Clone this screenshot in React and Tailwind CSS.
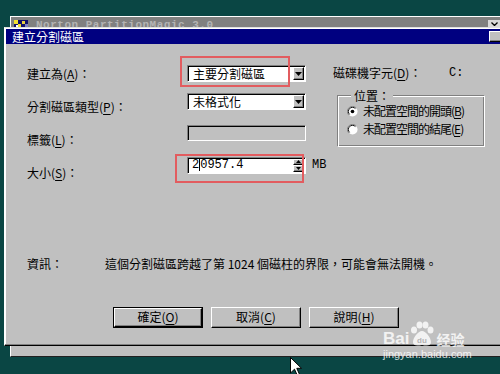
import React from 'react';

const cjk = "font-['Noto_Sans_CJK_TC','Noto_Sans_CJK_SC',sans-serif]";
const raised = 'border border-t-white border-l-white border-r-black border-b-black shadow-[inset_-1px_-1px_#808080]';
const sunken = 'border border-t-[#808080] border-l-[#808080] border-r-white border-b-white shadow-[inset_1px_1px_#000]';

function Key({ children }) {
  return <span className="underline underline-offset-2">{children}</span>;
}

function DownArrow() {
  return (
    <svg width="7" height="4" viewBox="0 0 7 4">
      <path d="M0 0H7L3.5 4Z" fill="#000" />
    </svg>
  );
}

function Dropdown({ value }) {
  return (
    <div className={`flex h-[17px] w-[119px] items-center bg-white ${sunken}`}>
      <span className="flex-1 pl-[5px] text-[12px] leading-none text-black">{value}</span>
      <div className={`mr-[1px] flex h-[13px] w-[11px] items-center justify-center bg-[#c0c0c0] ${raised}`}>
        <DownArrow />
      </div>
    </div>
  );
}

function Radio({ checked }) {
  return (
    <svg width="11" height="11" viewBox="0 0 12 12" className="shrink-0">
      <circle cx="6" cy="6" r="5.5" fill="#fff" />
      <path d="M10 2A5.6 5.6 0 0 0 2 10" stroke="#808080" strokeWidth="1" fill="none" />
      <path d="M9.2 2.8A4.5 4.5 0 0 0 2.8 9.2" stroke="#000" strokeWidth="1" fill="none" />
      {checked && <circle cx="6" cy="6" r="2" fill="#000" />}
    </svg>
  );
}

function Button({ children, isDefault }) {
  if (isDefault) {
    return (
      <div className="h-[21px] w-[90px] border border-black">
        <div className={`flex h-full w-full items-center justify-center bg-[#c0c0c0] text-[12px] ${raised}`}>
          {children}
        </div>
      </div>
    );
  }
  return (
    <div className={`flex h-[21px] w-[90px] items-center justify-center bg-[#c0c0c0] text-[12px] ${raised}`}>
      {children}
    </div>
  );
}

export default function App() {
  return (
    <div className={`relative h-[374px] w-[500px] overflow-hidden bg-[#0a4644] ${cjk} text-black`}>
      {/* background window, mostly hidden behind the dialog */}
      <div className="absolute left-[10px] top-[16px] h-[341px] w-[495px] border-t border-l border-t-white border-l-white border-b border-b-[#202020] bg-[#c0c0c0]">
        <div className="flex h-[10px] items-start overflow-hidden bg-[#808080] pl-[3px] pt-[2px]">
          <svg width="14" height="8" viewBox="0 0 14 8" className="mt-[1px] shrink-0">
            <rect width="14" height="8" fill="#10106a" />
            <rect x="0" y="0" width="4" height="4" fill="#f4e030" />
            <rect x="4" y="4" width="3" height="4" fill="#f4e030" />
            <rect x="8" y="1" width="3" height="3" fill="#e8d040" />
            <rect x="2" y="5" width="2" height="3" fill="#fff" />
            <rect x="11" y="4" width="3" height="3" fill="#8080c0" />
          </svg>
          <span className="ml-[8px] font-['Liberation_Mono',monospace] text-[11px] font-bold leading-[13px] tracking-[0.5px] text-[#b4b4b4]">
            Norton PartitionMagic 3.0
          </span>
          <div className="ml-auto mr-[5px] mt-[1px] flex h-[8px] w-[12px] shrink-0 items-center justify-center bg-[#d8d8d8]">
            <svg width="7" height="4" viewBox="0 0 7 4">
              <path d="M0.5 0.5L3.5 3.5L6.5 0.5" stroke="#000" strokeWidth="1.3" fill="none" />
            </svg>
          </div>
        </div>
      </div>

      {/* dialog */}
      <div className="absolute left-[4px] top-[27px] flex h-[319px] w-[503px] flex-col border border-t-[#dfdfdf] border-l-white border-r-black border-b-black bg-[#c0c0c0] p-[1px] shadow-[inset_-1px_-1px_#808080,inset_1px_1px_#fff]">
        <div className="flex h-[15px] items-center justify-between bg-[#000080] pl-[6px] pr-[2px]">
          <span className="text-[12px] leading-none text-white">建立分割磁區</span>
          <div className={`h-[11px] w-[14px] bg-[#c0c0c0] ${raised}`} />
        </div>

        <div className="flex flex-col pl-[21px] text-[12px]">
          <div className="flex items-start pt-[21px]">
            <div className="flex w-[160px] flex-col gap-[17px] pt-[0.5px]">
              <span className="h-4 leading-4">建立為(<Key>A</Key>)：</span>
              <span className="h-4 leading-4">分割磁區類型(<Key>P</Key>)：</span>
              <span className="h-4 leading-4">標籤(<Key>L</Key>)：</span>
              <span className="h-4 leading-4">大小(<Key>S</Key>)：</span>
            </div>

            <div className="flex w-[146px] flex-col">
              <Dropdown value="主要分割磁區" />
              <div className="mt-[11px]">
                <Dropdown value="未格式化" />
              </div>
              <div className={`mt-[15px] h-[16px] w-[119px] bg-[#c0c0c0] ${sunken}`} />
              <div className="mt-[15px] flex items-center">
                <div className={`flex h-[17px] w-[119px] items-center bg-white ${sunken}`}>
                  <span className="flex flex-1 items-center pl-[4px] font-['Liberation_Mono',monospace] text-[12px] leading-none">
                    2<span className="inline-block h-[12px] w-[1px] bg-black" />0957.4
                  </span>
                  <div className="mr-[1px] flex h-[13px] w-[11px] flex-col">
                    <div className={`flex h-1/2 items-center justify-center bg-[#c0c0c0] ${raised}`}>
                      <svg width="5" height="3" viewBox="0 0 5 3"><path d="M0 3H5L2.5 0Z" fill="#000" /></svg>
                    </div>
                    <div className={`flex h-1/2 items-center justify-center bg-[#c0c0c0] ${raised}`}>
                      <svg width="5" height="3" viewBox="0 0 5 3"><path d="M0 0H5L2.5 3Z" fill="#000" /></svg>
                    </div>
                  </div>
                </div>
                <span className="ml-[6px] font-['Liberation_Mono',monospace] text-[12px]">MB</span>
              </div>
            </div>

            <div className="flex flex-col">
              <div className="flex h-4 items-center leading-4">
                <span className="w-[116px]">磁碟機字元(<Key>D</Key>)：</span>
                <span className="font-['Liberation_Mono',monospace]">C:</span>
              </div>
              <div className="ml-[4px] mt-[14px] h-[52px] w-[148px] border border-t-[#808080] border-l-[#808080] border-r-white border-b-white shadow-[inset_1px_1px_#fff,inset_-1px_-1px_#808080]">
                <div className="-mt-[6px] ml-[13px] h-[12px] w-fit bg-[#c0c0c0] px-[3px] leading-[12px]">位置：</div>
                <div className="flex h-[18px] items-center pl-[9px]">
                  <Radio checked />
                  <span className="ml-[5px] tracking-[-1px]">未配置空間的開頭(<Key>B</Key>)</span>
                </div>
                <div className="flex h-[18px] items-center pl-[9px]">
                  <Radio />
                  <span className="ml-[5px] tracking-[-1px]">未配置空間的結尾(<Key>E</Key>)</span>
                </div>
              </div>
            </div>
          </div>

          <div className="mt-[75px] flex h-4 items-center leading-4">
            <span className="w-[78px]">資訊：</span>
            <span>這個分割磁區跨越了第 1024 個磁柱的界限，可能會無法開機。</span>
          </div>

          <div className="ml-[86px] mt-[35px] flex gap-[8px]">
            <Button isDefault>確定(<Key>O</Key>)</Button>
            <Button>取消(<Key>C</Key>)</Button>
            <Button>說明(<Key>H</Key>)</Button>
          </div>
        </div>
      </div>

      {/* red annotation boxes */}
      <div className="absolute left-[180px] top-[56px] h-[31px] w-[110px] border-2 border-[#e25c5f]" />
      <div className="absolute left-[175px] top-[154px] h-[29px] w-[129px] border-2 border-[#e25c5f]" />

      {/* mouse cursor */}
      <svg className="absolute left-[290px] top-[357px]" width="12" height="19" viewBox="0 0 12 19">
        <path d="M0.5 0.5V16L4.5 12.2L7.2 18.2L9.4 17.2L6.8 11.3H11.5Z" fill="#fff" stroke="#000" strokeWidth="1" />
      </svg>

      {/* watermark */}
      <div className="absolute left-[383px] top-[321px] flex flex-col items-start opacity-80">
        <div className="flex items-end">
          <span className="font-['Liberation_Sans',sans-serif] text-[17px] font-bold leading-[17px] text-white">Bai</span>
          <svg width="28" height="26" viewBox="0 0 28 26" className="-ml-[1px]">
            <ellipse cx="6" cy="9" rx="3" ry="3.6" fill="#fff" />
            <ellipse cx="11.5" cy="4" rx="3" ry="3.6" fill="#fff" />
            <ellipse cx="17.5" cy="4" rx="3" ry="3.6" fill="#fff" />
            <ellipse cx="22.5" cy="9" rx="3" ry="3.6" fill="#fff" />
            <path d="M14 10C10 10 5 17 5 21C5 25 9 25 14 24C19 25 23 25 23 21C23 17 18 10 14 10Z" fill="#fff" />
            <text x="14" y="22" textAnchor="middle" fontSize="8" fontWeight="bold" fill="#b0b0b0" fontFamily="Liberation Sans">du</text>
          </svg>
          <span className="text-[14px] font-bold leading-[16px] text-white">经验</span>
        </div>
        <span className="mt-[2px] font-['Liberation_Sans',sans-serif] text-[11px] leading-[11px] text-white">jingyan.baidu.com</span>
      </div>
    </div>
  );
}
